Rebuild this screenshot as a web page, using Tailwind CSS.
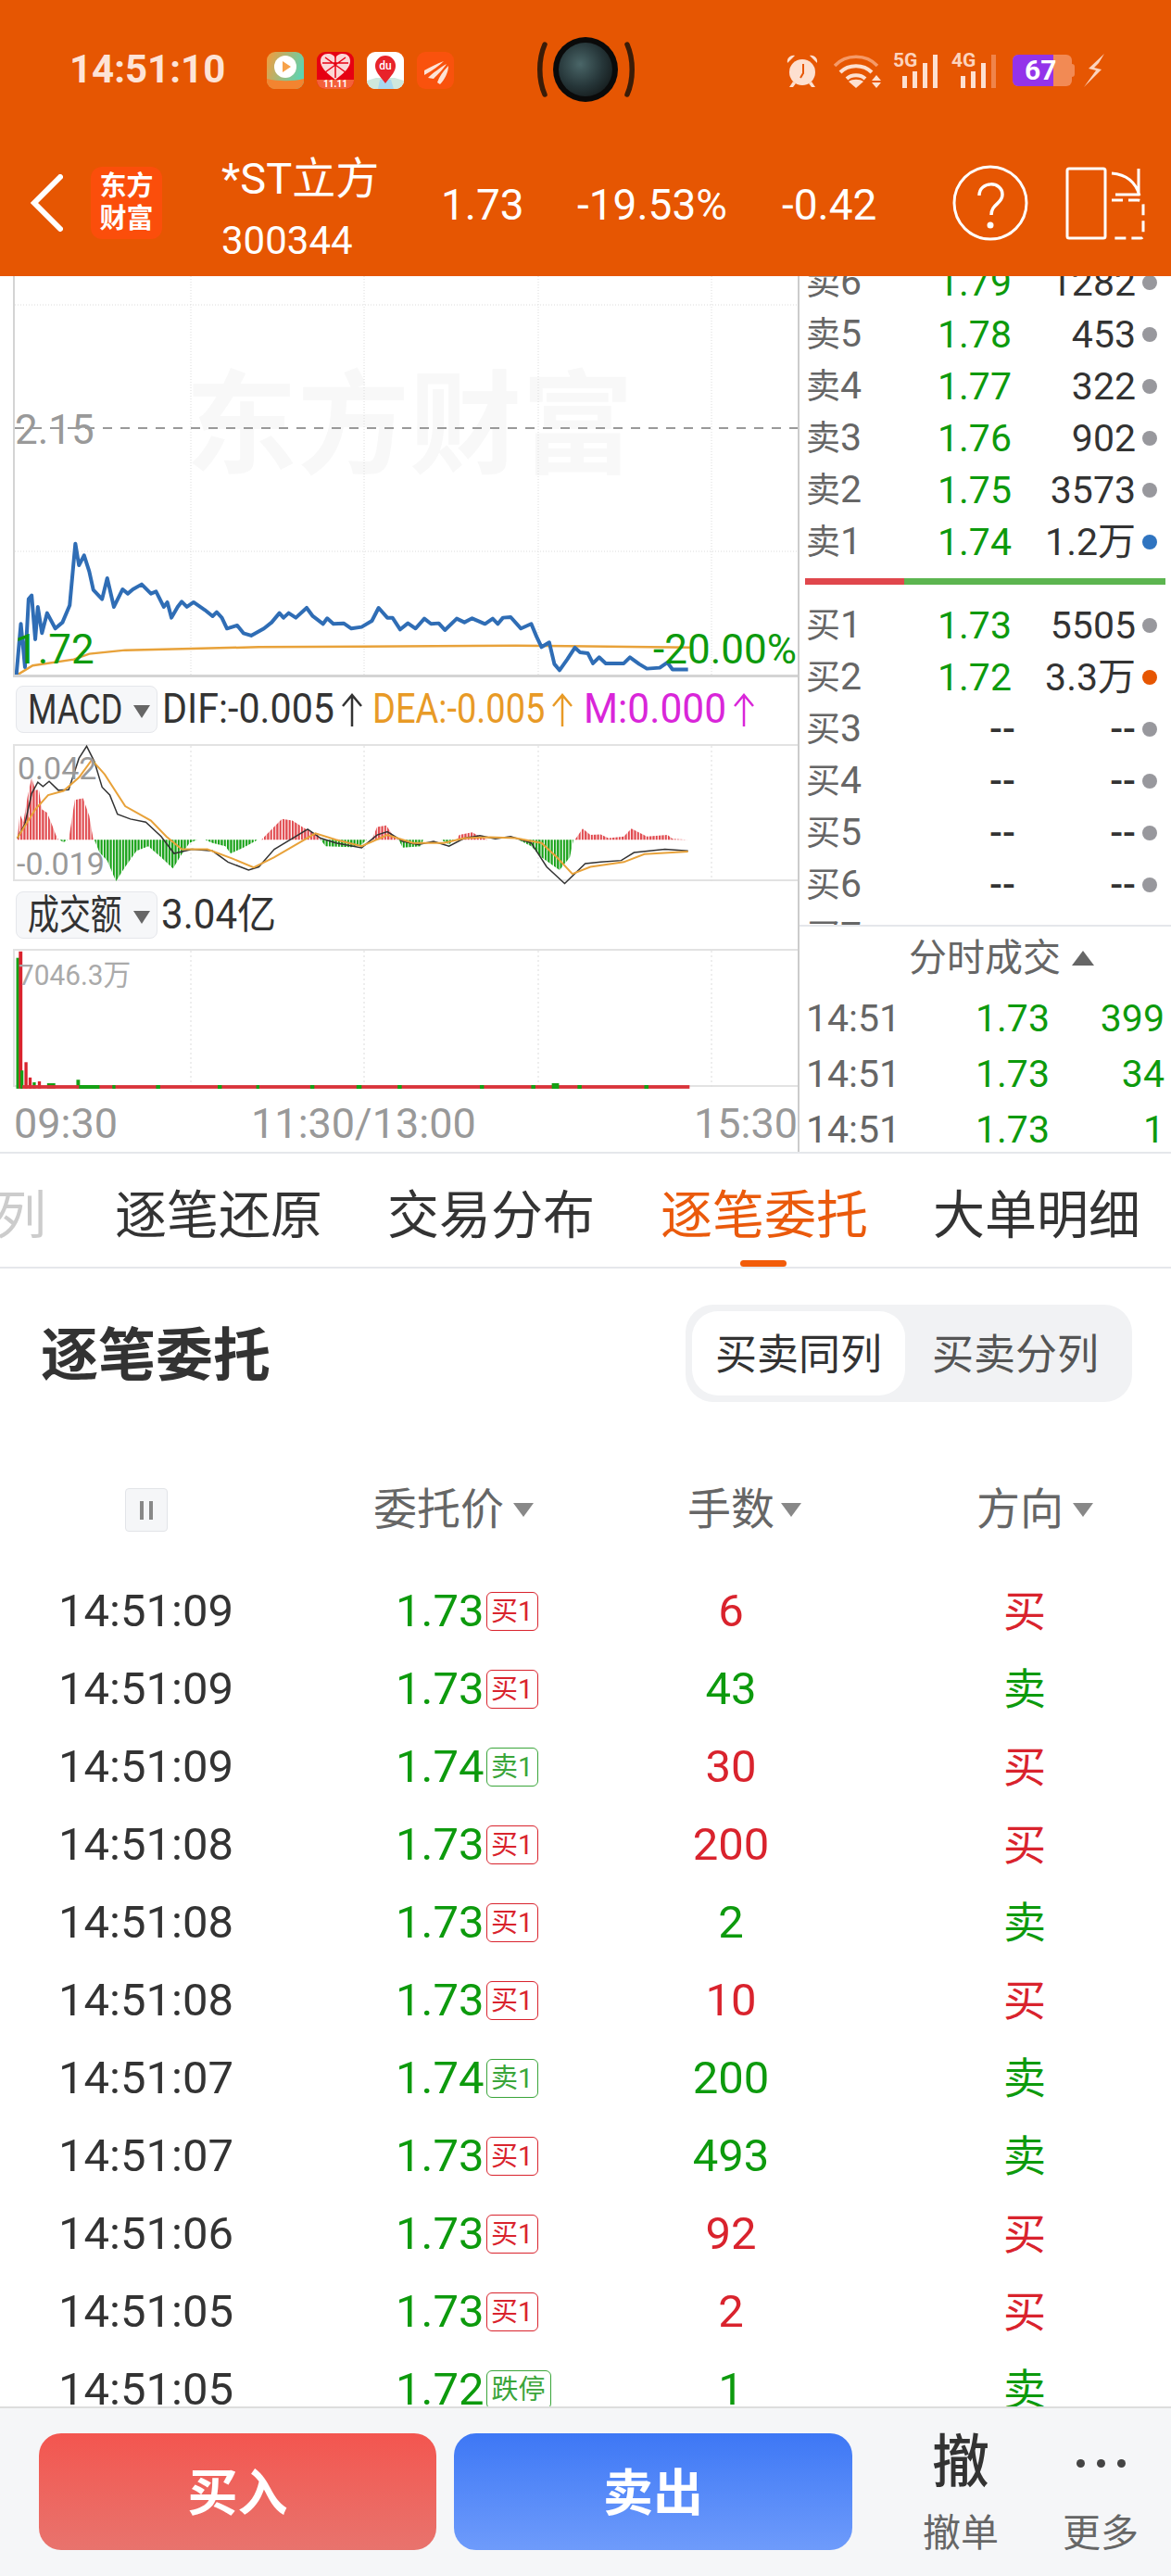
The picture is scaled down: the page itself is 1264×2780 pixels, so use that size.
<!DOCTYPE html>
<html lang="zh-CN">
<head>
<meta charset="UTF-8" />
<meta name="viewport" content="width=device-width, initial-scale=1.0" />
<title>逐笔委托</title>
<script src="https://cdn.jsdelivr.net/npm/@tailwindcss/browser@4"></script>
</head>
<body class="bg-white font-['Roboto','Noto_Sans_CJK_SC',sans-serif] text-[#333]">
<div class="w-[1264px] h-[2780px] flex flex-col overflow-hidden">

  <!-- Orange header -->
  <header class="h-[298px] shrink-0 bg-[#e65602] text-white relative">
    <!-- Status bar -->
    <div class="h-[150px] relative">
      <span class="absolute left-[75px] top-[53px] text-[42px] leading-[44px] font-bold text-[#fde3d6]">14:51:10</span>
      <div class="absolute left-[288px] top-[56px] flex gap-[14px]">
        <svg class="w-[40px] h-[40px]" viewBox="0 0 40 40"><defs><linearGradient id="v1" x1="0" y1="0" x2="1" y2="0.4"><stop offset="0" stop-color="#f79a3a"/><stop offset="1" stop-color="#5fd3b0"/></linearGradient></defs><rect width="40" height="40" rx="9" fill="url(#v1)"/><path d="M0 29c12 3 28 3 40 0v2a9 9 0 0 1-9 9H9a9 9 0 0 1-9-9z" fill="#f38430"/><circle cx="20" cy="16" r="12" fill="#fff"/><path d="M17 10l9 6-9 6z" fill="#f7a24a"/></svg>
        <svg class="w-[40px] h-[40px]" viewBox="0 0 40 40"><rect width="40" height="40" rx="9" fill="#e60012"/><path d="M0 30h40v1a9 9 0 0 1-9 9H9a9 9 0 0 1-9-9z" fill="#f4603a"/><path d="M20 30C9 22 4 16 4 10c0-5 3-8 8-8 4 0 7 2 8 5 1-3 4-5 8-5 5 0 8 3 8 8 0 6-5 12-16 20z" fill="#fbd7d7"/><path d="M20 4v24M6 12h28M9 6l22 16M31 6L9 22" stroke="#e60012" stroke-width="1.5"/><text x="20" y="38" text-anchor="middle" font-size="10" font-weight="700" fill="#fff">11.11</text></svg>
        <svg class="w-[40px] h-[40px]" viewBox="0 0 40 40"><rect width="40" height="40" rx="9" fill="#fff"/><path d="M0 31l10-3h20l10 3v0a9 9 0 0 1-9 9H9a9 9 0 0 1-9-9z" fill="#cfe8de"/><path d="M14 30h12l3 10H12z" fill="#a8d8f0"/><path d="M20 34C13 25 9 21 9 15a11 11 0 0 1 22 0c0 6-4 10-11 19z" fill="#e8232a"/><text x="20" y="19" text-anchor="middle" font-size="12" font-weight="500" fill="#fff">du</text></svg>
        <svg class="w-[40px] h-[40px]" viewBox="0 0 40 40"><rect width="40" height="40" rx="9" fill="#f9520d"/><path d="M8 20c7-4 13-7 21-10-5 5-12 10-21 15zM12 28c5-5 13-11 20-15-3 5-10 12-14 16zM22 33c2-6 6-12 12-18 0 7-4 15-9 20z" fill="#fde3d6"/></svg>
      </div>
      <!-- Camera cut-out -->
      <svg class="absolute left-[575px] top-[38px] w-[115px] h-[74px]" viewBox="0 0 115 74"><defs><radialGradient id="cam" cx="0.4" cy="0.4" r="0.7"><stop offset="0" stop-color="#4a6668"/><stop offset="0.6" stop-color="#263639"/><stop offset="1" stop-color="#141a1b"/></radialGradient></defs><path d="M13 10C6 26 6 48 13 64" fill="none" stroke="#3a1c08" stroke-width="5.5" stroke-linecap="round"/><path d="M102 10C109 26 109 48 102 64" fill="none" stroke="#3a1c08" stroke-width="5.5" stroke-linecap="round"/><circle cx="57" cy="37" r="35" fill="#0a0a0a"/><circle cx="57" cy="37" r="29" fill="url(#cam)"/></svg>
      <!-- Right status icons -->
      <div class="absolute left-[847px] top-[56px] flex items-center h-[40px]">
        <svg class="w-[38px] h-[38px]" viewBox="0 0 38 38"><circle cx="19" cy="21" r="14" fill="#fde0d0"/><path d="M3 11c-1-5 3-9 8-8zM35 11c1-5-3-9-8-8zM9 31l-4 6h4l3-4zM29 31l4 6h-4l-3-4z" fill="#fde0d0"/><path d="M20 12v10l-3 5" fill="none" stroke="#e65602" stroke-width="2"/></svg>
        <svg class="w-[52px] h-[38px] ml-[15px]" viewBox="0 0 52 38"><path d="M1 14C13 1 35 1 47 14" fill="none" stroke="#f59a68" stroke-width="3.5"/><path d="M7 21c9-9 25-9 34 0M14 28c5-5 15-5 20 0" fill="none" stroke="#fde0d0" stroke-width="4"/><path d="M24 38l-8-7c4-3 12-3 16 0z" fill="#fde0d0"/><path d="M46 24l5 6H41zM46 38l5-6H41z" fill="#fde0d0"/></svg>
        <div class="relative w-[50px] h-[38px] ml-[12px]">
          <span class="absolute left-0 top-[-3px] text-[21px] leading-[22px] font-bold text-[#fcd3bd]">5G</span>
          <div class="absolute left-[10px] bottom-0 flex items-end gap-[6px]"><i class="block w-[5px] h-[13px] bg-[#fde0d0]"></i><i class="block w-[5px] h-[18px] bg-[#fde0d0]"></i><i class="block w-[5px] h-[27px] bg-[#fde0d0]"></i><i class="block w-[5px] h-[36px] bg-[#fde0d0]"></i></div>
        </div>
        <div class="relative w-[50px] h-[38px] ml-[13px]">
          <span class="absolute left-0 top-[-3px] text-[21px] leading-[22px] font-bold text-[#fcd3bd]">4G</span>
          <div class="absolute left-[10px] bottom-0 flex items-end gap-[6px]"><i class="block w-[5px] h-[13px] bg-[#fde0d0]"></i><i class="block w-[5px] h-[18px] bg-[#fde0d0]"></i><i class="block w-[5px] h-[27px] bg-[#fde0d0]"></i><i class="block w-[5px] h-[36px] bg-[#f0844a]"></i></div>
        </div>
        <div class="relative flex w-[64px] h-[34px] ml-[16px] rounded-[6px] overflow-hidden bg-[#f28a54]">
          <div class="w-[44px] h-full bg-[#9333ea]"></div>
          <span class="absolute left-[13px] top-0 text-[30px] leading-[34px] font-bold text-white">67</span>
        </div>
        <div class="w-[3px] h-[14px] bg-[#f28a54] rounded-r"></div>
        <svg class="w-[22px] h-[36px] ml-[10px]" viewBox="0 0 22 36"><path d="M22 0L5 16l8 2L0 36l19-19-8-2 5-5z" fill="#fcd3bd"/></svg>
      </div>
    </div>

    <!-- Title row -->
    <div class="absolute left-[32px] top-[188px]">
      <svg class="w-[36px] h-[62px]" viewBox="0 0 36 62"><path d="M33 3L5 31l28 28" fill="none" stroke="#fff" stroke-width="6" stroke-linecap="round"/></svg>
    </div>
    <div class="absolute left-[98px] top-[180px] w-[77px] h-[78px] rounded-[12px] bg-[#fb4e0b] flex flex-col items-center justify-center font-bold text-[29px] leading-[35px]">
      <span>东方</span><span>财富</span>
    </div>
    <span class="absolute left-[239px] top-[165px] text-[47px] leading-[56px]">*ST立方</span>
    <span class="absolute left-[239px] top-[236px] text-[42px] leading-[48px]">300344</span>
    <span class="absolute left-[476px] top-[195px] text-[46px] leading-[52px]">1.73</span>
    <span class="absolute left-[623px] top-[195px] text-[46px] leading-[52px]">-19.53%</span>
    <span class="absolute left-[844px] top-[195px] text-[46px] leading-[52px]">-0.42</span>
    <svg class="absolute left-[1028px] top-[178px] w-[82px] h-[82px]" viewBox="0 0 82 82"><circle cx="41" cy="41" r="39" fill="none" stroke="#fff" stroke-width="3"/><path d="M29 33c0-16 25-16 25-1 0 10-12 10-12 22" fill="none" stroke="#fff" stroke-width="3.5"/><circle cx="41" cy="65" r="3.5" fill="#fff"/></svg>
    <svg class="absolute left-[1150px] top-[178px] w-[86px] h-[82px]" viewBox="0 0 86 82" fill="none" stroke="#fff" stroke-width="3"><rect x="2" y="4" width="41" height="75" rx="2"/><path d="M50 9c12 1 25 6 30 24M79 4v28H54"/><path d="M50 38h28c4 0 6 2 6 5v33c0 2-1 3-3 3H50" stroke-dasharray="12 6"/></svg>
  </header>

  <!-- Chart + order book -->
  <section class="h-[947px] shrink-0 flex border-b-2 border-[#e5e7eb]">
    <div class="w-[861px] shrink-0 pl-[14px] flex flex-col">
      <!-- Price chart -->
      <div class="relative h-[433px] shrink-0 border-l-2 border-b-[3px] border-[#d4d4d4] overflow-hidden">
        <span class="absolute left-[184px] top-[92px] text-[121px] leading-[140px] font-bold text-[#f8f8f8] whitespace-nowrap">东方财富</span>
        <svg class="absolute left-0 top-0 w-[847px] h-[433px] overflow-visible" viewBox="0 0 847 433">
          <g stroke="#dcdcdc" stroke-dasharray="1 2" fill="none">
            <path d="M190 0V431M377 0V431M565 0V431M752 0V431M0 31H847M0 297H847"/>
          </g>
          <path d="M0 164H847" stroke="#999" stroke-width="2" stroke-dasharray="10 9"/>
          <g transform="translate(-14 2) scale(.5548 .3333)" fill="none">
            <polyline vector-effect="non-scaling-stroke" stroke="#e8a23a" stroke-width="2.5" points="30,1285 60,1255 140,1235 170,1217 240,1205 370,1200 500,1195 700,1193 1000,1190 1100,1192 1340,1196"/>
            <polyline vector-effect="non-scaling-stroke" stroke="#2f6db5" stroke-width="4" stroke-linejoin="round" points="28,1290 37,1120 45,1260 52,1040 58,1028 65,1170 70,1065 78,1150 88,1085 104,1135 118,1115 132,1060 143,860 150,930 160,898 170,950 178,1010 195,1040 205,972 218,1065 235,1008 245,1022 255,1008 272,992 290,1022 300,1015 315,1065 322,1050 330,1100 342,1065 350,1048 360,1065 373,1050 395,1075 410,1095 418,1082 428,1100 438,1135 458,1125 470,1150 485,1158 510,1135 525,1115 540,1085 548,1100 558,1085 572,1100 593,1068 605,1095 625,1120 633,1102 645,1120 665,1118 680,1135 700,1130 720,1110 733,1068 750,1100 760,1100 775,1138 790,1118 805,1135 822,1103 835,1120 850,1118 862,1140 885,1103 900,1115 915,1102 940,1120 955,1103 965,1120 975,1100 990,1098 1010,1135 1030,1120 1040,1160 1050,1195 1065,1180 1075,1250 1085,1270 1100,1235 1115,1197 1125,1212 1140,1215 1150,1248 1162,1228 1175,1248 1210,1248 1222,1228 1240,1250 1255,1265 1280,1262 1295,1245 1305,1268 1335,1268"/>
          </g>
        </svg>
        <span class="absolute left-0 top-[141px] text-[44px] leading-[50px] text-[#999]">2.15</span>
        <span class="absolute left-0 top-[378px] text-[44px] leading-[50px] text-[#0d9a0d]">1.72</span>
        <span class="absolute right-[1px] top-[378px] text-[44px] leading-[50px] text-[#0d9a0d]">-20.00%</span>
      </div>

      <!-- MACD legend -->
      <div class="h-[72px] shrink-0 pl-[3px] pt-[9px] flex items-start text-[44px] leading-[50px] whitespace-nowrap">
        <div class="w-[153px] h-[51px] shrink-0 rounded-[8px] border border-[#e5e7eb] bg-[#f6f7f9] flex items-center pl-[12px] relative">
          <span class="inline-block origin-left scale-x-[.82]">MACD</span>
          <i class="absolute left-[126px] top-[20px] block w-0 h-0 border-x-[9px] border-x-transparent border-t-[14px] border-t-[#666]"></i>
        </div>
        <div class="relative flex-1 h-[51px]">
          <span class="absolute left-[5px] origin-left scale-x-[.937]">DIF:-0.005</span>
          <svg class="absolute left-[198px] top-[8px] w-[24px] h-[36px]" viewBox="0 0 24 36" fill="none" stroke="#333" stroke-width="2.5"><path d="M12 36V2M2 14L12 2l10 12"/></svg>
          <span class="absolute left-[232px] origin-left scale-x-[.863] text-[#e89a26]">DEA:-0.005</span>
          <svg class="absolute left-[425px] top-[8px] w-[24px] h-[36px]" viewBox="0 0 24 36" fill="none" stroke="#e89a26" stroke-width="2.5"><path d="M12 36V2M2 14L12 2l10 12"/></svg>
          <span class="absolute left-[460px] origin-left scale-x-[.965] text-[#d926d9]">M:0.000</span>
          <svg class="absolute left-[621px] top-[8px] w-[24px] h-[36px]" viewBox="0 0 24 36" fill="none" stroke="#d926d9" stroke-width="2.5"><path d="M12 36V2M2 14L12 2l10 12"/></svg>
        </div>
      </div>

      <!-- MACD chart -->
      <div class="relative h-[148px] shrink-0 border-l-2 border-t-2 border-b-2 border-[#e2e2e2]">
        <svg class="absolute left-0 top-0 w-[847px] h-[146px] overflow-visible" viewBox="0 0 847 146">
          <defs>
            <pattern id="stripeR" width="6" height="10" patternUnits="userSpaceOnUse"><rect width="4" height="10" fill="#e0474c"/></pattern>
            <pattern id="stripeG" width="6" height="10" patternUnits="userSpaceOnUse"><rect width="4" height="10" fill="#14a014"/></pattern>
          </defs>
          <path d="M190 0V146M377 0V146M565 0V146M752 0V146" stroke="#dcdcdc" stroke-dasharray="2 3" fill="none"/>
          <g transform="translate(-14 -83) scale(.5548 .3444)" fill="none">
            <g fill="url(#stripeR)">
              <polygon points="30,535 35,455 42,480 50,400 58,340 65,380 72,378 78,440 88,450 98,490 105,520 110,535"/>
              <polygon points="130,535 142,410 158,405 170,460 178,535"/>
              <polygon points="505,535 520,510 545,470 565,475 590,500 615,520 620,535"/>
              <polygon points="720,535 730,495 748,490 760,520 770,535"/>
              <polygon points="885,535 890,520 915,512 930,525 945,535"/>
              <polygon points="1115,535 1130,500 1145,520 1165,518 1180,530 1210,525 1225,500 1255,525 1295,520 1305,532 1335,535"/>
            </g>
            <g fill="url(#stripeG)">
              <polygon points="112,535 120,543 128,535"/>
              <polygon points="180,535 190,575 205,600 222,665 240,620 262,570 285,555 310,590 333,625 350,580 365,545 380,535"/>
              <polygon points="395,535 410,545 435,555 445,578 470,560 498,535"/>
              <polygon points="620,535 630,555 680,558 700,550 710,535"/>
              <polygon points="772,535 780,560 815,555 820,535"/>
              <polygon points="855,535 870,550 880,535"/>
              <polygon points="1005,535 1030,555 1050,590 1085,630 1105,590 1112,535"/>
            </g>
            <polyline vector-effect="non-scaling-stroke" stroke="#333" stroke-width="1.5" points="30,530 45,485 58,390 70,355 80,368 92,352 110,380 130,378 150,280 165,242 180,290 195,370 210,395 225,455 250,470 280,480 310,525 335,578 370,565 410,570 440,605 480,630 500,620 530,565 595,502 620,530 650,545 700,560 730,520 750,510 780,540 810,550 840,540 870,555 900,530 930,522 960,532 990,525 1030,545 1060,620 1095,672 1135,610 1165,605 1205,600 1230,575 1290,565 1335,570"/>
            <polyline vector-effect="non-scaling-stroke" stroke="#e8a23a" stroke-width="2" points="30,530 65,440 90,395 120,382 150,340 175,285 200,330 240,430 290,475 320,525 350,565 400,565 450,595 490,622 530,590 610,515 650,535 700,555 750,520 800,545 860,545 900,530 950,527 1000,530 1050,545 1080,590 1110,642 1145,620 1210,605 1250,580 1335,572"/>
          </g>
        </svg>
        <span class="absolute left-[3px] top-[4px] text-[34px] leading-[40px] text-[#999]">0.042</span>
        <span class="absolute left-[2px] top-[107px] text-[34px] leading-[40px] text-[#999]">-0.019</span>
      </div>

      <!-- Amount legend -->
      <div class="h-[73px] shrink-0 pl-[3px] pt-[11px] flex items-start text-[44px] leading-[50px] whitespace-nowrap">
        <div class="w-[153px] h-[51px] shrink-0 rounded-[8px] border border-[#e5e7eb] bg-[#f6f7f9] flex items-center pl-[12px] relative">
          <span class="inline-block origin-left scale-x-[.77]">成交额</span>
          <i class="absolute left-[126px] top-[20px] block w-0 h-0 border-x-[9px] border-x-transparent border-t-[14px] border-t-[#666]"></i>
        </div>
        <span class="inline-block ml-[4px] origin-left scale-x-[.957]">3.04亿</span>
      </div>

      <!-- Amount chart -->
      <div class="relative h-[149px] shrink-0 border-l-2 border-t-2 border-b-2 border-[#e2e2e2]">
        <svg class="absolute left-0 top-0 w-[847px] h-[147px] overflow-visible" viewBox="0 0 847 147">
          <path d="M190 0V147M377 0V147M565 0V147M752 0V147" stroke="#dcdcdc" stroke-dasharray="2 3" fill="none"/>
          <g transform="translate(-14 -304) scale(.5548 .3444)">
            <rect x="28" y="905" width="6" height="410" fill="#14a014"/>
            <rect x="33" y="885" width="7" height="430" fill="#d9232d"/>
            <rect x="36" y="1258" width="6" height="57" fill="#14a014"/>
            <rect x="44" y="1232" width="6" height="83" fill="#d9232d"/>
            <rect x="52" y="1280" width="6" height="35" fill="#d9232d"/>
            <rect x="60" y="1295" width="6" height="20" fill="#14a014"/>
            <rect x="70" y="1292" width="6" height="23" fill="#d9232d"/>
            <rect x="88" y="1298" width="16" height="17" fill="#14a014"/>
            <rect x="145" y="1287" width="7" height="28" fill="#14a014"/>
            <rect x="40" y="1304" width="1298" height="11" fill="#d9333a"/>
            <path d="M150 1304h40v11h-40zM215 1304h6v11h-6zM300 1304h8v11h-8zM420 1304h8v11h-8zM495 1304h6v11h-6zM600 1304h8v11h-8zM690 1304h10v11h-10zM770 1304h8v11h-8zM930 1304h8v11h-8zM1030 1304h8v11h-8zM1070 1298h14v17h-14zM1120 1304h8v11h-8zM1250 1304h8v11h-8z" fill="#14a014"/>
          </g>
        </svg>
        <span class="absolute left-[4px] top-[8px] text-[32px] leading-[36px] text-[#aaa] inline-block origin-left scale-x-[.93]">7046.3万</span>
      </div>

      <!-- Time axis -->
      <div class="flex-1 flex pl-[1px] pt-[15px] text-[45px] leading-[50px] text-[#999] whitespace-nowrap">
        <span>09:30</span><span class="ml-[144px]">11:30/13:00</span><span class="ml-auto">15:30</span>
      </div>
    </div>

    <!-- Order book -->
    <div class="flex-1 min-w-0 flex flex-col border-l-2 border-[#ccc]">
      <div class="h-[702px] shrink-0 overflow-hidden border-b-2 border-[#e5e7eb]">
        <div class="-mt-[21px] text-[41px] leading-[56px] whitespace-nowrap">
          <div class="h-[56px] flex items-center pl-[7px]"><span class="w-[142px] text-[#666]"><span class="text-[37px]">卖</span>6</span><span class="w-[80px] text-[#0d9a0d]">1.79</span><span class="w-[134px] text-right">1282</span><i class="ml-[7px] block w-[16px] h-[16px] rounded-full bg-[#98989d]"></i></div>
          <div class="h-[56px] flex items-center pl-[7px]"><span class="w-[142px] text-[#666]"><span class="text-[37px]">卖</span>5</span><span class="w-[80px] text-[#0d9a0d]">1.78</span><span class="w-[134px] text-right">453</span><i class="ml-[7px] block w-[16px] h-[16px] rounded-full bg-[#98989d]"></i></div>
          <div class="h-[56px] flex items-center pl-[7px]"><span class="w-[142px] text-[#666]"><span class="text-[37px]">卖</span>4</span><span class="w-[80px] text-[#0d9a0d]">1.77</span><span class="w-[134px] text-right">322</span><i class="ml-[7px] block w-[16px] h-[16px] rounded-full bg-[#98989d]"></i></div>
          <div class="h-[56px] flex items-center pl-[7px]"><span class="w-[142px] text-[#666]"><span class="text-[37px]">卖</span>3</span><span class="w-[80px] text-[#0d9a0d]">1.76</span><span class="w-[134px] text-right">902</span><i class="ml-[7px] block w-[16px] h-[16px] rounded-full bg-[#98989d]"></i></div>
          <div class="h-[56px] flex items-center pl-[7px]"><span class="w-[142px] text-[#666]"><span class="text-[37px]">卖</span>2</span><span class="w-[80px] text-[#0d9a0d]">1.75</span><span class="w-[134px] text-right">3573</span><i class="ml-[7px] block w-[16px] h-[16px] rounded-full bg-[#98989d]"></i></div>
          <div class="h-[56px] flex items-center pl-[7px]"><span class="w-[142px] text-[#666]"><span class="text-[37px]">卖</span>1</span><span class="w-[80px] text-[#0d9a0d]">1.74</span><span class="w-[134px] text-right">1.2万</span><i class="ml-[7px] block w-[16px] h-[16px] rounded-full bg-[#2f74c0]"></i></div>

          <div class="mt-[11px] mb-[16px] ml-[6px] w-[389px] h-[7px] flex">
            <div class="w-[107px] bg-[#e0474c]"></div><div class="flex-1 bg-[#5cb550]"></div>
          </div>

          <div class="h-[56px] flex items-center pl-[7px]"><span class="w-[142px] text-[#666]"><span class="text-[37px]">买</span>1</span><span class="w-[80px] text-[#0d9a0d]">1.73</span><span class="w-[134px] text-right">5505</span><i class="ml-[7px] block w-[16px] h-[16px] rounded-full bg-[#98989d]"></i></div>
          <div class="h-[56px] flex items-center pl-[7px]"><span class="w-[142px] text-[#666]"><span class="text-[37px]">买</span>2</span><span class="w-[80px] text-[#0d9a0d]">1.72</span><span class="w-[134px] text-right">3.3万</span><i class="ml-[7px] block w-[16px] h-[16px] rounded-full bg-[#e65602]"></i></div>
          <div class="h-[56px] flex items-center pl-[7px]"><span class="w-[142px] text-[#666]"><span class="text-[37px]">买</span>3</span><span class="w-[80px] pl-[56px] font-medium">--</span><span class="w-[134px] text-right font-medium">--</span><i class="ml-[7px] block w-[16px] h-[16px] rounded-full bg-[#98989d]"></i></div>
          <div class="h-[56px] flex items-center pl-[7px]"><span class="w-[142px] text-[#666]"><span class="text-[37px]">买</span>4</span><span class="w-[80px] pl-[56px] font-medium">--</span><span class="w-[134px] text-right font-medium">--</span><i class="ml-[7px] block w-[16px] h-[16px] rounded-full bg-[#98989d]"></i></div>
          <div class="h-[56px] flex items-center pl-[7px]"><span class="w-[142px] text-[#666]"><span class="text-[37px]">买</span>5</span><span class="w-[80px] pl-[56px] font-medium">--</span><span class="w-[134px] text-right font-medium">--</span><i class="ml-[7px] block w-[16px] h-[16px] rounded-full bg-[#98989d]"></i></div>
          <div class="h-[56px] flex items-center pl-[7px]"><span class="w-[142px] text-[#666]"><span class="text-[37px]">买</span>6</span><span class="w-[80px] pl-[56px] font-medium">--</span><span class="w-[134px] text-right font-medium">--</span><i class="ml-[7px] block w-[16px] h-[16px] rounded-full bg-[#98989d]"></i></div>
          <div class="h-[56px] flex items-center pl-[7px]"><span class="w-[142px] text-[#666]"><span class="text-[37px]">买</span>7</span></div>
        </div>
      </div>

      <!-- Ticks -->
      <div class="h-[66px] shrink-0 pl-[118px] pt-[2px] flex items-center gap-[12px] text-[#666]">
        <span class="text-[41px] leading-[50px]">分时成交</span>
        <i class="block w-0 h-0 border-x-[12px] border-x-transparent border-b-[16px] border-b-[#666]"></i>
      </div>
      <div class="pl-[7px] pt-[3px] text-[41px] leading-[60px]">
        <div class="h-[60px] flex"><span class="w-[183px] text-[#666]">14:51</span><span class="text-[#0d9a0d]">1.73</span><span class="w-[124px] text-right text-[#0d9a0d]">399</span></div>
        <div class="h-[60px] flex"><span class="w-[183px] text-[#666]">14:51</span><span class="text-[#0d9a0d]">1.73</span><span class="w-[124px] text-right text-[#0d9a0d]">34</span></div>
        <div class="h-[60px] flex"><span class="w-[183px] text-[#666]">14:51</span><span class="text-[#0d9a0d]">1.73</span><span class="w-[124px] text-right text-[#0d9a0d]">1</span></div>
      </div>
    </div>
  </section>

  <!-- Tabs -->
  <nav class="relative h-[124px] shrink-0 border-b-2 border-[#e5e7eb] text-[56px] leading-[60px] flex items-start pt-[37px] whitespace-nowrap">
    <span class="absolute left-[-6px] text-[#ccc]">列</span>
    <span class="ml-[124px]">逐笔还原</span>
    <span class="ml-[70px]">交易分布</span>
    <span class="ml-[71px] text-[#ea5a0c]">逐笔委托</span>
    <span class="ml-[70px]">大单明细</span>
    <i class="absolute left-[799px] bottom-0 block w-[50px] h-[7px] rounded-full bg-[#f25c0a]"></i>
  </nav>

  <!-- Order list -->
  <main class="flex-1 min-h-0 overflow-hidden">
    <div class="flex items-center justify-between pl-[44px] pr-[42px] pt-[39px]">
      <h2 class="text-[62px] leading-[70px] font-bold pt-[6px]">逐笔委托</h2>
      <div class="w-[482px] h-[105px] rounded-[30px] bg-[#f1f2f4] p-[7px] flex items-center text-[45px]">
        <div class="w-[230px] h-[91px] rounded-[28px] bg-white flex items-center justify-center pt-[4px]">买卖同列</div>
        <div class="flex-1 text-center text-[#555] pt-[4px]">买卖分列</div>
      </div>
    </div>

    <div class="flex items-center h-[47px] mt-[93px] text-[47px] text-[#666] whitespace-nowrap">
      <div class="ml-[135px] w-[46px] h-[47px] rounded-[4px] border border-[#e2e4e8] bg-[#f5f6f8] flex items-center justify-center gap-[6px]"><i class="block w-[4px] h-[20px] bg-[#888]"></i><i class="block w-[4px] h-[20px] bg-[#888]"></i></div>
      <span class="ml-[222px]">委托价</span>
      <i class="ml-[10px] block w-0 h-0 border-x-[11px] border-x-transparent border-t-[15px] border-t-[#888]"></i>
      <span class="ml-[166px]">手数</span>
      <i class="ml-[7px] block w-0 h-0 border-x-[11px] border-x-transparent border-t-[15px] border-t-[#888]"></i>
      <span class="ml-[189px]">方向</span>
      <i class="ml-[10px] block w-0 h-0 border-x-[11px] border-x-transparent border-t-[15px] border-t-[#888]"></i>
    </div>

    <div class="mt-[44px] text-[49px] leading-[84px]">
      <div class="h-[84px] grid grid-cols-[427px_273px_178px_317px] items-center"><span class="pl-[63px]">14:51:09</span><span class="flex items-center text-[#0d9a0d]">1.73<i class="not-italic ml-[2px] w-[56px] h-[42px] rounded-[6px] border border-[#d9232d] text-[#d9232d] text-[29px] leading-[40px] text-center">买1</i></span><span class="text-center text-[#d9232d]">6</span><span class="pl-[139px] text-center text-[#d9232d] text-[46px]">买</span></div>
      <div class="h-[84px] grid grid-cols-[427px_273px_178px_317px] items-center"><span class="pl-[63px]">14:51:09</span><span class="flex items-center text-[#0d9a0d]">1.73<i class="not-italic ml-[2px] w-[56px] h-[42px] rounded-[6px] border border-[#d9232d] text-[#d9232d] text-[29px] leading-[40px] text-center">买1</i></span><span class="text-center text-[#0d9a0d]">43</span><span class="pl-[139px] text-center text-[#0d9a0d] text-[46px]">卖</span></div>
      <div class="h-[84px] grid grid-cols-[427px_273px_178px_317px] items-center"><span class="pl-[63px]">14:51:09</span><span class="flex items-center text-[#0d9a0d]">1.74<i class="not-italic ml-[2px] w-[56px] h-[42px] rounded-[6px] border border-[#3aa53a] text-[#3aa53a] text-[29px] leading-[40px] text-center">卖1</i></span><span class="text-center text-[#d9232d]">30</span><span class="pl-[139px] text-center text-[#d9232d] text-[46px]">买</span></div>
      <div class="h-[84px] grid grid-cols-[427px_273px_178px_317px] items-center"><span class="pl-[63px]">14:51:08</span><span class="flex items-center text-[#0d9a0d]">1.73<i class="not-italic ml-[2px] w-[56px] h-[42px] rounded-[6px] border border-[#d9232d] text-[#d9232d] text-[29px] leading-[40px] text-center">买1</i></span><span class="text-center text-[#d9232d]">200</span><span class="pl-[139px] text-center text-[#d9232d] text-[46px]">买</span></div>
      <div class="h-[84px] grid grid-cols-[427px_273px_178px_317px] items-center"><span class="pl-[63px]">14:51:08</span><span class="flex items-center text-[#0d9a0d]">1.73<i class="not-italic ml-[2px] w-[56px] h-[42px] rounded-[6px] border border-[#d9232d] text-[#d9232d] text-[29px] leading-[40px] text-center">买1</i></span><span class="text-center text-[#0d9a0d]">2</span><span class="pl-[139px] text-center text-[#0d9a0d] text-[46px]">卖</span></div>
      <div class="h-[84px] grid grid-cols-[427px_273px_178px_317px] items-center"><span class="pl-[63px]">14:51:08</span><span class="flex items-center text-[#0d9a0d]">1.73<i class="not-italic ml-[2px] w-[56px] h-[42px] rounded-[6px] border border-[#d9232d] text-[#d9232d] text-[29px] leading-[40px] text-center">买1</i></span><span class="text-center text-[#d9232d]">10</span><span class="pl-[139px] text-center text-[#d9232d] text-[46px]">买</span></div>
      <div class="h-[84px] grid grid-cols-[427px_273px_178px_317px] items-center"><span class="pl-[63px]">14:51:07</span><span class="flex items-center text-[#0d9a0d]">1.74<i class="not-italic ml-[2px] w-[56px] h-[42px] rounded-[6px] border border-[#3aa53a] text-[#3aa53a] text-[29px] leading-[40px] text-center">卖1</i></span><span class="text-center text-[#0d9a0d]">200</span><span class="pl-[139px] text-center text-[#0d9a0d] text-[46px]">卖</span></div>
      <div class="h-[84px] grid grid-cols-[427px_273px_178px_317px] items-center"><span class="pl-[63px]">14:51:07</span><span class="flex items-center text-[#0d9a0d]">1.73<i class="not-italic ml-[2px] w-[56px] h-[42px] rounded-[6px] border border-[#d9232d] text-[#d9232d] text-[29px] leading-[40px] text-center">买1</i></span><span class="text-center text-[#0d9a0d]">493</span><span class="pl-[139px] text-center text-[#0d9a0d] text-[46px]">卖</span></div>
      <div class="h-[84px] grid grid-cols-[427px_273px_178px_317px] items-center"><span class="pl-[63px]">14:51:06</span><span class="flex items-center text-[#0d9a0d]">1.73<i class="not-italic ml-[2px] w-[56px] h-[42px] rounded-[6px] border border-[#d9232d] text-[#d9232d] text-[29px] leading-[40px] text-center">买1</i></span><span class="text-center text-[#d9232d]">92</span><span class="pl-[139px] text-center text-[#d9232d] text-[46px]">买</span></div>
      <div class="h-[84px] grid grid-cols-[427px_273px_178px_317px] items-center"><span class="pl-[63px]">14:51:05</span><span class="flex items-center text-[#0d9a0d]">1.73<i class="not-italic ml-[2px] w-[56px] h-[42px] rounded-[6px] border border-[#d9232d] text-[#d9232d] text-[29px] leading-[40px] text-center">买1</i></span><span class="text-center text-[#d9232d]">2</span><span class="pl-[139px] text-center text-[#d9232d] text-[46px]">买</span></div>
      <div class="h-[84px] grid grid-cols-[427px_273px_178px_317px] items-center"><span class="pl-[63px]">14:51:05</span><span class="flex items-center text-[#0d9a0d]">1.72<i class="not-italic ml-[2px] w-[70px] h-[42px] rounded-[6px] border border-[#3aa53a] text-[#3aa53a] text-[29px] leading-[40px] text-center">跌停</i></span><span class="text-center text-[#0d9a0d]">1</span><span class="pl-[139px] text-center text-[#0d9a0d] text-[46px]">卖</span></div>
    </div>
  </main>

  <!-- Bottom bar -->
  <footer class="h-[183px] shrink-0 border-t-2 border-[#ddd] bg-[#f5f6f8] flex pl-[42px] pt-[27px]">
    <div class="w-[429px] h-[126px] rounded-[24px] bg-linear-to-b from-[#f3554f] to-[#e8736d] flex items-center justify-center pt-[4px] text-white text-[54px] font-bold">买入</div>
    <div class="w-[430px] h-[126px] ml-[19px] rounded-[24px] bg-linear-to-b from-[#3d77f5] to-[#6e9bfb] flex items-center justify-center pt-[4px] text-white text-[54px] font-bold">卖出</div>
    <div class="w-[84px] ml-[75px] flex flex-col items-center">
      <span class="text-[62px] leading-[64px] font-medium">撤</span>
      <span class="mt-[22px] text-[41px] leading-[44px] text-[#666] whitespace-nowrap">撤单</span>
    </div>
    <div class="w-[84px] ml-[67px] flex flex-col items-center">
      <div class="h-[64px] flex items-center justify-center gap-[13px]"><i class="block w-[9px] h-[9px] rounded-full bg-[#444]"></i><i class="block w-[9px] h-[9px] rounded-full bg-[#444]"></i><i class="block w-[9px] h-[9px] rounded-full bg-[#444]"></i></div>
      <span class="mt-[22px] text-[41px] leading-[44px] text-[#666] whitespace-nowrap">更多</span>
    </div>
  </footer>
</div>
</body>
</html>
